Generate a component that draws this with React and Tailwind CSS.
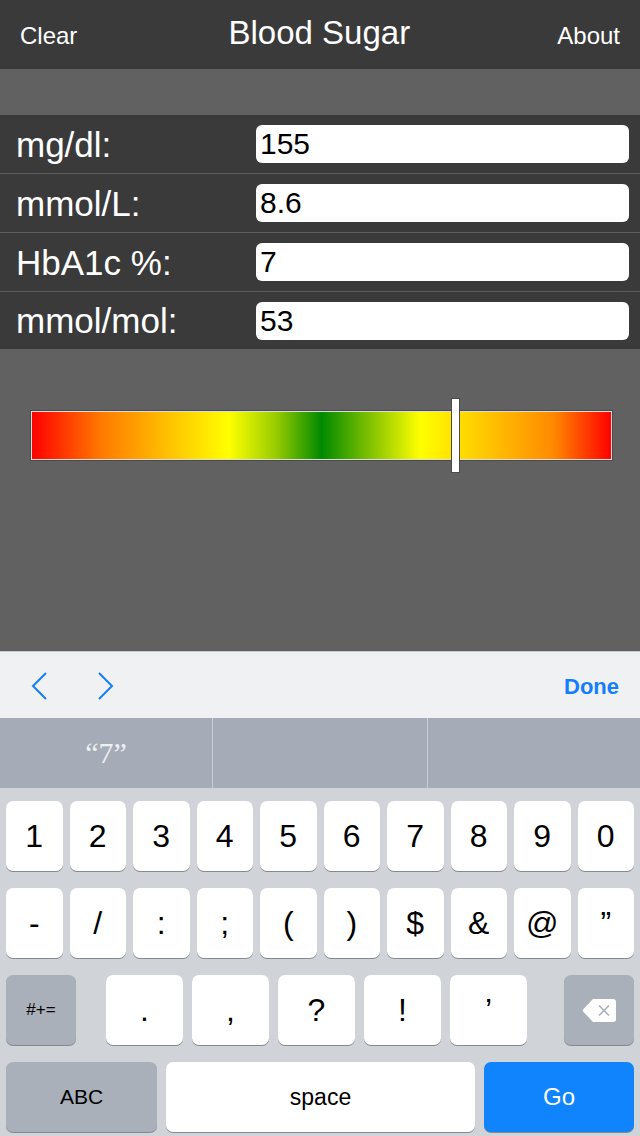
import React from "react";

const font = { fontFamily: '"Liberation Sans", Arial, sans-serif' };

function Key({ children, className = "", bg = "bg-white text-black" }) {
  return (
    <div
      className={
        "flex items-center justify-center rounded-[7px] shadow-[0_1px_0_#85898f] h-[70px] " +
        bg +
        " " +
        className
      }
    >
      {children}
    </div>
  );
}

function Row({ label, value, last }) {
  return (
    <div
      className={
        "flex items-center " +
        (last ? "h-[57px]" : "h-[59px] border-b border-[#5c5c5c]")
      }
    >
      <div className="w-[240px] pl-[16px] text-[35px] text-white leading-none">
        {label}
      </div>
      <input
        readOnly
        value={value}
        className="ml-[16px] w-[373px] h-[38px] rounded-[6px] bg-white pl-[4px] text-[30px] text-black leading-none outline-none"
        style={font}
      />
    </div>
  );
}

export default function App() {
  const row1 = ["1", "2", "3", "4", "5", "6", "7", "8", "9", "0"];
  const row2 = ["-", "/", ":", ";", "(", ")", "$", "&", "@", "\u201D"];
  const row3 = [".", ",", "?", "!", "\u2019"];
  const special = "bg-[#a9b0ba] text-black";
  return (
    <div className="w-[640px] h-[1136px] flex flex-col bg-[#616161] overflow-hidden" style={font}>
      {/* header */}
      <div className="h-[69px] shrink-0 bg-[#3a3a3a] flex items-baseline justify-between px-[20px] pt-[16px] text-white">
        <span className="text-[24px] leading-none">Clear</span>
        <span className="text-[33px] leading-none ml-[4px]">Blood Sugar</span>
        <span className="text-[24px] leading-none">About</span>
      </div>
      <div className="h-[46px] shrink-0 bg-[#616161]" />
      <div className="shrink-0 bg-[#3a3a3a]">
        <Row label="mg/dl:" value="155" />
        <Row label="mmol/L:" value="8.6" />
        <Row label="HbA1c %:" value="7" />
        <Row label="mmol/mol:" value="53" last />
      </div>
      {/* gauge area */}
      <div className="flex-1 bg-[#616161] pt-[62px]">
        <div className="relative ml-[31px] w-[581px] h-[49px] border border-[#dcdcdc] shadow-[0_0_0_1px_#4a4a4a] bg-[linear-gradient(to_right,#ff0000_0%,#ff7a00_12%,#ffc400_24%,#ffff00_34%,#9acd00_42%,#008a00_50%,#7bbf00_58%,#ffff00_67%,#ffc800_78%,#ff8a00_90%,#ff0000_100%)]">
          <div className="absolute left-[419px] top-[-14px] w-[9px] h-[75px] bg-white border border-[#4a4a4a]" />
        </div>
      </div>
      {/* keyboard */}
      <div className="shrink-0 h-[485px] flex flex-col">
        <div className="h-[67px] bg-[#f0f1f3] border-t border-[#c8c8c8] flex items-center px-[31px]">
          <svg width="16" height="28" viewBox="0 0 16 28" className="mt-[2px]">
            <polyline points="15,1 2,14 15,27" fill="none" stroke="#157efb" strokeWidth="2" />
          </svg>
          <svg width="16" height="28" viewBox="0 0 16 28" className="ml-[51px] mt-[2px]">
            <polyline points="1,1 14,14 1,27" fill="none" stroke="#157efb" strokeWidth="2" />
          </svg>
          <span className="ml-auto mr-[-10px] text-[22px] font-bold text-[#157efb] mt-[2px]">Done</span>
        </div>
        <div className="h-[70px] bg-[#a5acb7] flex">
          <div className="w-[212px] flex items-center justify-center text-[30px] text-[#eef0f3] pb-[2px]" style={{ fontFamily: '"Liberation Serif", "Times New Roman", serif' }}>
            {"\u201C7\u201D"}
          </div>
          <div className="w-[1px] bg-[#c9ced5]" />
          <div className="w-[214px]" />
          <div className="w-[1px] bg-[#c9ced5]" />
          <div className="flex-1" />
        </div>
        <div className="flex-1 bg-[#d0d4d9] px-[6px] pt-[13px] flex flex-col gap-[16px]">
          <div className="grid grid-cols-10 gap-x-[7px]">
            {row1.map((k) => (
              <Key key={k} className="text-[32px]">{k}</Key>
            ))}
          </div>
          <div className="grid grid-cols-10 gap-x-[7px] mt-[1px]">
            {row2.map((k) => (
              <Key key={k} className="text-[32px]">{k}</Key>
            ))}
          </div>
          <div className="flex mt-[1px]">
            <Key bg={special} className="w-[70px] text-[17px]">#+=</Key>
            <div className="ml-[30px] flex gap-[9px]">
              {row3.map((k) => (
                <Key key={k} className="w-[77px] text-[32px]">{k}</Key>
              ))}
            </div>
            <Key bg={special} className="ml-auto w-[70px]">
              <svg width="34" height="23" viewBox="0 0 34 23">
                <path d="M11 0 H31 Q34 0 34 3 V20 Q34 23 31 23 H11 L1.5 13 Q0 11.5 1.5 10 Z" fill="#ffffff" />
                <path d="M17 6.5 L27 16.5 M27 6.5 L17 16.5" stroke="#a9b0ba" strokeWidth="1.6" />
              </svg>
            </Key>
          </div>
          <div className="flex gap-[9px] mt-[1px]">
            <Key bg={special} className="w-[151px] text-[21px]">ABC</Key>
            <Key className="flex-1 text-[23px]">space</Key>
            <Key bg="bg-[#0f84fc] text-white" className="w-[150px] text-[24px]">Go</Key>
          </div>
        </div>
      </div>
    </div>
  );
}
